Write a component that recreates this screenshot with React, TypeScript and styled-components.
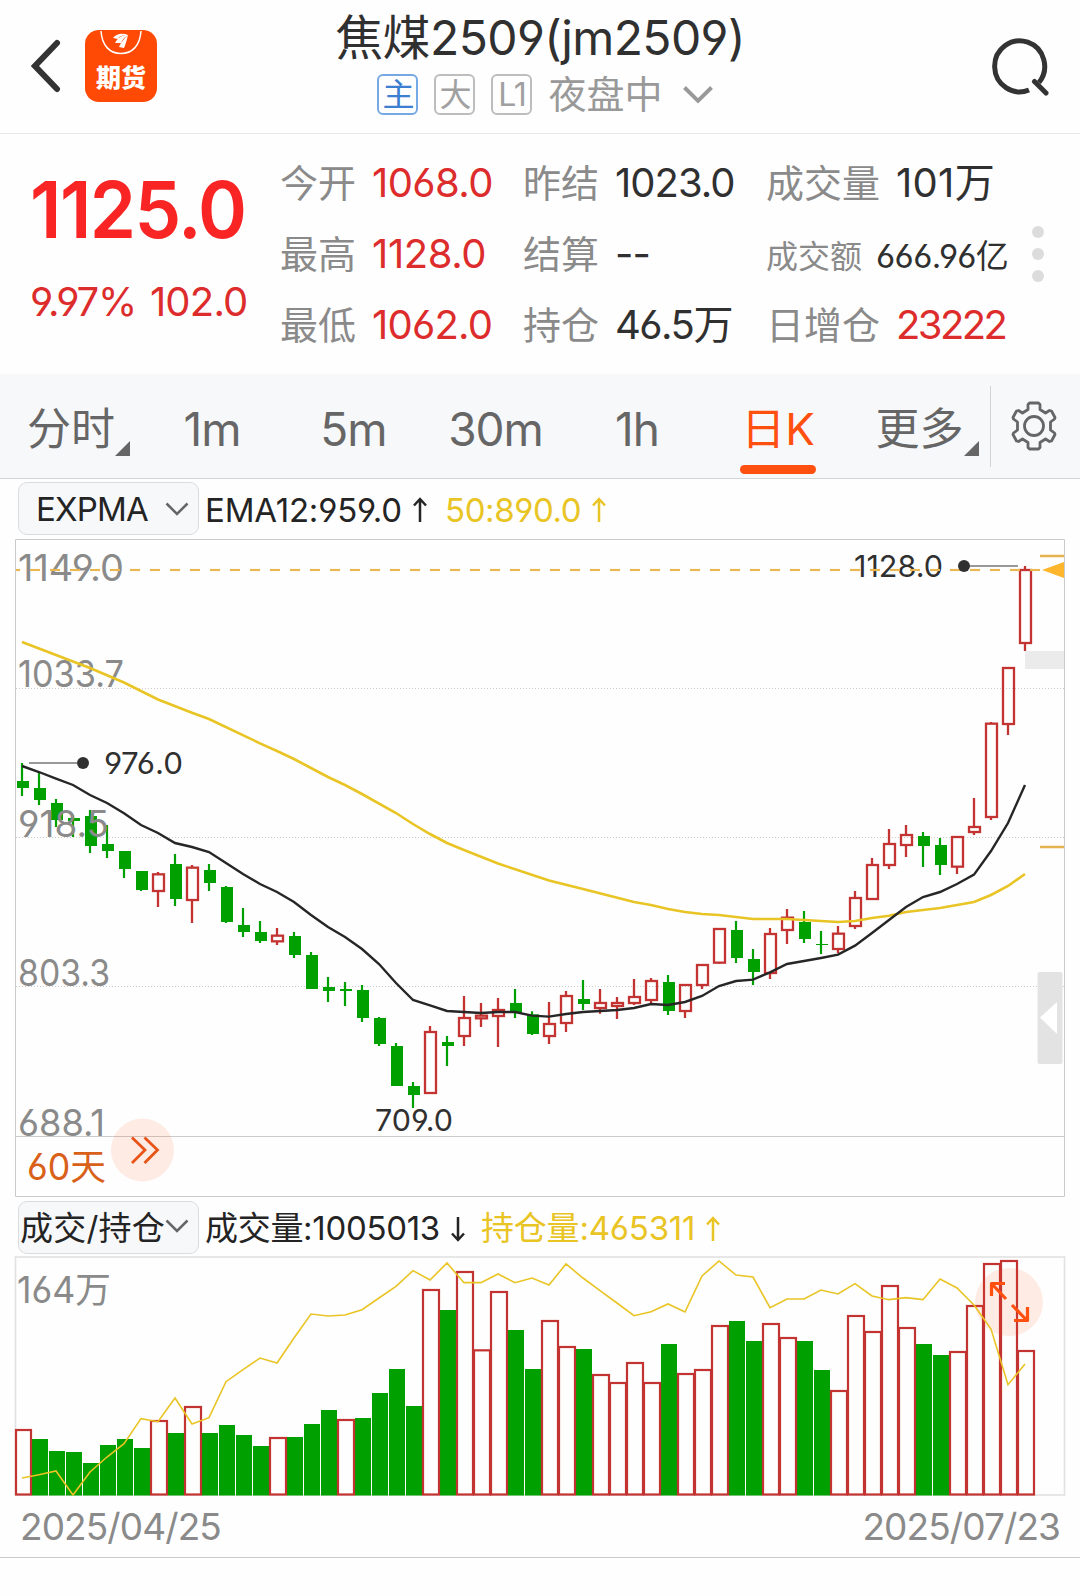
import React from 'react';
import styled, { createGlobalStyle } from 'styled-components';

const GlobalStyle = createGlobalStyle`
  body { margin: 0; background: #fefefe; }
  * { box-sizing: border-box; }
`;

const FONT = `Inter, 'Noto Sans CJK SC', sans-serif`;
const RED = '#dd2c2c';
const CANDLE_RED = '#c23331';
const GREEN = '#00a000';
const ORANGE = '#ff5010';
const YELLOW = '#e9c425';
const GREY = '#8a8a8a';
const INK = '#303030';

const Screen = styled.main`
  width: 1080px;
  height: 1596px;
  display: flex;
  flex-direction: column;
  background: #fefefe;
  font-family: ${FONT};
  font-feature-settings: 'cv03', 'cv04';
  color: ${INK};
  overflow: hidden;
`;

const Header = styled.header`
  height: 134px;
  flex: none;
  display: grid;
  grid-template-columns: 180px 1fr 180px;
  border-bottom: 1px solid #e9e9e9;
`;

const HeaderLeft = styled.div`
  display: flex;
  align-items: center;
  gap: 24px;
  padding: 0 0 1px 31px;
`;

const HeaderRight = styled.div`
  display: flex;
  align-items: center;
  justify-content: flex-end;
  padding: 0 30px 0 0;
`;

const HeaderCenter = styled.div`
  display: flex;
  flex-direction: column;
  align-items: center;
`;

const Title = styled.h1`
  margin: 0;
  height: 74px;
  line-height: 76px;
  font-size: 48px;
  font-weight: 400;
  letter-spacing: -0.6px;
  white-space: nowrap;
`;

const SubRow = styled.div`
  display: flex;
  align-items: center;
  height: 41px;
  padding-left: 10px;
  color: #999;
`;

const Tag = styled.span<{ $active?: boolean }>`
  width: 41px;
  height: 41px;
  margin-right: 16px;
  border: 2px solid ${p => (p.$active ? '#76a9e4' : '#bdbdbd')};
  border-radius: 6px;
  color: ${p => (p.$active ? '#3c7fd0' : '#a0a0a0')};
  font-size: 32px;
  line-height: 37px;
  letter-spacing: -1px;
  display: flex;
  justify-content: center;
`;

const Session = styled.span`
  font-size: 38px;
  line-height: 41px;
  margin-right: 20px;
`;

const Quote = styled.section`
  height: 240px;
  flex: none;
  display: grid;
  grid-template-columns: 280px 243px 243px 260px 1fr;
`;

const PriceBox = styled.div`
  padding: 35px 0 0 30px;
  white-space: nowrap;
`;

const Price = styled.div`
  color: #f92525;
  font-size: 79px;
  font-weight: 600;
  line-height: 80px;
  letter-spacing: -1.6px;
  transform: scaleX(0.94);
  transform-origin: left;
`;

const Change = styled.div`
  margin-top: 32px;
  color: ${RED};
  font-size: 40px;
  line-height: 42px;
  letter-spacing: -0.8px;
  display: flex;
  gap: 14px;
`;

const Percent = styled.span`
  letter-spacing: -1.3px;
`;

const Stats = styled.dl`
  margin: 0;
  padding: 13px 0 0;
  display: flex;
  flex-direction: column;
`;

const Stat = styled.div<{ $small?: boolean }>`
  height: 71px;
  display: flex;
  align-items: baseline;
  gap: ${p => (p.$small ? 14 : 16)}px;
  line-height: ${p => (p.$small ? 76 : 71)}px;
  font-size: ${p => (p.$small ? 32 : 38)}px;
  white-space: nowrap;
`;

const StatName = styled.dt`
  color: ${GREY};
`;

const StatValue = styled.dd<{ $tone?: string; $small?: boolean; $ls?: number }>`
  margin: 0;
  color: ${p => p.$tone || INK};
  font-size: ${p => (p.$small ? 33 : 40)}px;
  letter-spacing: ${p => p.$ls ?? -1}px;
`;

const Dots = styled.div`
  display: flex;
  flex-direction: column;
  gap: 10px;
  padding: 92px 0 0 6px;
`;

const Dot = styled.i`
  width: 12px;
  height: 12px;
  border-radius: 50%;
  background: #dcdcdc;
`;

const Tabs = styled.nav`
  height: 105px;
  flex: none;
  display: grid;
  grid-template-columns: 141px 141px 142px 142px 141px 141px 142px 1fr;
  background: #f7f8fa;
  border-bottom: 1px solid #d3d5d7;
`;

const Tab = styled.div<{ $active?: boolean; $corner?: boolean }>`
  display: flex;
  flex-direction: column;
  align-items: center;
  justify-content: space-between;
  padding: 23px 0 4px ${p => (p.$corner ? 16 : 1)}px;
  color: ${p => (p.$active ? ORANGE : '#666')};
  font-size: 46px;
  line-height: 60px;
  letter-spacing: -1px;
`;

const TabLabel = styled.div<{ $cjk?: boolean }>`
  height: 62px;
  display: flex;
  align-items: flex-end;
  white-space: nowrap;
  ${p => p.$cjk && 'font-size: 44px; letter-spacing: 0;'}
`;

const Underline = styled.i`
  width: 76px;
  height: 9px;
  border-radius: 5px;
  background: ${ORANGE};
`;

const Corner = styled.i`
  width: 0;
  height: 0;
  margin: 0 0 3px 0;
  border-left: 15px solid transparent;
  border-bottom: 15px solid #666;
`;

const SettingsCell = styled.div`
  height: 81px;
  margin-top: 12px;
  border-left: 1px solid #d2d4d6;
  display: flex;
  align-items: center;
  padding: 0 0 1px 20px;
`;

const IndicatorRow = styled.div<{ $h: number; $top: number }>`
  height: ${p => p.$h}px;
  flex: none;
  padding: ${p => p.$top}px 0 0 18px;
  display: flex;
  font-size: 33px;
  line-height: 53px;
  white-space: nowrap;
`;

const Select = styled.button<{ $pad: number; $ls: number; $lift: number }>`
  width: 181px;
  height: 53px;
  padding: 0 9px ${p => p.$lift}px ${p => p.$pad}px;
  display: flex;
  align-items: center;
  justify-content: space-between;
  background: #f7f8fa;
  border: 1px solid #dadde0;
  border-radius: 9px;
  font: 400 33px ${FONT};
  letter-spacing: ${p => p.$ls}px;
  white-space: nowrap;
  color: #242424;
`;

const Reading = styled.span<{ $color?: string; $ls: number; $w: number }>`
  width: ${p => p.$w}px;
  margin-left: 6px;
  color: ${p => p.$color || '#242424'};
  letter-spacing: ${p => p.$ls}px;
  display: flex;
  align-items: center;
  gap: 11px;
`;

const ChartSvg = styled.svg`
  display: block;
  flex: none;
  font-family: ${FONT};
`;

const Dates = styled.footer`
  height: 62px;
  flex: none;
  display: flex;
  justify-content: space-between;
  padding: 0 20px;
  border-bottom: 1px solid #cbcbcb;
  color: ${GREY};
  font-size: 37px;
  line-height: 62px;
  letter-spacing: -0.9px;
`;

const ChevronDown = ({ w, h, s, c }: { w: number; h: number; s: number; c: string }) => (
  <svg width={w} height={h} viewBox={`0 0 ${w} ${h}`} fill="none" stroke={c} strokeWidth={s}>
    <path d={`M1.5 1.5 L${w / 2} ${h - s * 0.8} L${w - 1.5} 1.5`} />
  </svg>
);

const Arrow = ({ down, c = '#242424' }: { down?: boolean; c?: string }) => (
  <svg width="14" height="26" viewBox="0 0 14 26" fill="none" stroke={c} strokeWidth="2.500">
    <path d={down ? 'M7 1V24M1 17.5L7 24L13 17.5' : 'M7 25V2M1 8.5L7 2L13 8.5'} />
  </svg>
);

const Logo = () => (
  <svg width="72" height="72" viewBox="0 0 72 72">
    <rect width="72" height="72" rx="14" fill="#ff4a05" />
    <path d="M16 1 C17 16 25 23.500 36 23.500 C47 23.500 55 16 56 1" fill="none" stroke="#fff" strokeWidth="1.500" />
    <path d="M28 8 C32 3 38 3 43 5 C38 5 34 6 33 9 Z M30 13 C33 7 38 5 43 5 C39 8 37 10 36 13 Z M34 17 C36 12 39 9 43 5 C42 9 41 13 39 18 Z" fill="#fff" />
    <text x="36" y="56.500" textAnchor="middle" fontSize="25" fontWeight="900" fill="#fff" fontFamily="'Noto Sans CJK SC', sans-serif">期货</text>
  </svg>
);

const Gear = () => (
  <svg width="46" height="50" viewBox="0 0 46 50" fill="none" stroke="#666" strokeWidth="2.800" strokeLinejoin="round">
    <path d="M18.500 2 H27.500 L29 3.500 V8.500 L34.500 12 L38.500 9.500 L40.500 10 L44 16.500 L43.500 18 L39.500 21 V29 L43.500 32 L44 33.500 L40.500 40 L38.500 40.500 L34.500 38 L29 41.500 V46.500 L27.500 48 H18.500 L17 46.500 V41.500 L11.500 38 L7.500 40.500 L5.500 40 L2 33.500 L2.500 32 L6.500 29 V21 L2.500 18 L2 16.500 L5.500 10 L7.500 9.500 L11.500 12 L17 8.500 V3.500 Z" />
    <circle cx="23" cy="25" r="9.500" />
  </svg>
);

/* up flag, high, body top, body bottom, low */
type Candle = [number, number, number, number, number];
const at = (base: number, rows: Candle[]): Candle[] =>
  rows.map(([u, ...v]) => [u, ...v.map(n => base + n / 3)] as Candle);

const CANDLES: Candle[] = [
  ...at(700, [
    [0, 189, 243, 264, 288], [0, 216, 264, 300, 315], [0, 297, 309, 360, 381], [0, 345, 354, 363, 411],
    [0, 330, 348, 438, 459], [0, 375, 432, 453, 474], [0, 453, 453, 507, 534], [0, 513, 513, 570, 573],
    [1, 516, 520, 576, 621], [0, 462, 492, 597, 618], [1, 495, 500, 603, 669], [0, 492, 510, 549, 573],
    [0, 558, 561, 666, 669], [0, 624, 675, 696, 711], [0, 663, 696, 723, 729], [1, 684, 704, 727, 735],
    [0, 696, 708, 765, 774], [0, 756, 765, 867, 867], [0, 831, 861, 873, 906], [0, 846, 867, 873, 918],
  ]),
  ...at(850, [
    [0, 405, 420, 504, 516], [0, 501, 504, 582, 588], [0, 579, 588, 708, 708], [0, 696, 708, 735, 774],
    [1, 528, 543, 732, 732], [0, 558, 576, 588, 648], [1, 438, 501, 561, 588], [1, 459, 494, 508, 531],
    [1, 444, 477, 501, 591], [0, 417, 459, 487, 504], [0, 484, 493, 552, 555], [1, 456, 519, 561, 582],
    [1, 423, 435, 522, 546], [0, 390, 447, 462, 480], [1, 417, 456, 477, 491], [1, 441, 456, 471, 507],
    [1, 387, 438, 462, 465], [1, 384, 390, 453, 462], [0, 375, 396, 483, 495], [1, 402, 402, 486, 504],
    [1, 342, 342, 408, 417],
  ]),
  ...at(750, [
    [1, 534, 534, 641, 641], [0, 513, 540, 624, 639], [0, 597, 627, 666, 705], [1, 534, 549, 672, 687],
    [1, 477, 500, 543, 582], [0, 483, 516, 567, 579], [0, 543, 582, 585, 612], [1, 528, 548, 600, 609],
    [1, 423, 441, 531, 537], [1, 324, 342, 450, 450], [1, 237, 279, 348, 357], [1, 225, 252, 288, 321],
    [0, 246, 258, 288, 351], [0, 264, 285, 345, 375], [1, 258, 258, 353, 372], [1, 144, 228, 249, 255],
    [1, -84, -82, 204, 210], [1, -249, -249, -75, -45], [1, -552, -543, -318, -297],
  ]),
];

const EMA12 = [
  ...[198, 216, 236, 255, 285, 309, 340, 375, 399, 429, 441, 456, 489, 522, 552, 576, 606, 645, 681, 711, 747].map(v => 700 + v / 3),
  ...[342, 399, 450, 466, 483, 486, 489, 486, 486, 497, 500, 492, 486, 483, 480, 474, 462, 465, 456, 438].map(v => 850 + v / 3),
  ...[708, 693, 689, 667, 642, 633, 624, 614, 587, 549, 510, 471, 441, 426, 402, 374, 303, 219, 105].map(v => 750 + v / 3),
];

const EMA50: [number, number][] = [
  [0, 642], [2, 655], [4, 668], [6, 682.5], [8, 699.500], [10, 712.700], [11, 719], [14, 743.300], [15, 751], [16, 759], [17, 768],
  [18, 777], [19, 785], [20, 794], [22, 813], [23, 824], [24, 834], [25, 843], [26, 850], [28, 863.500], [31, 880.500],
  [33, 889], [36, 902], [37, 905], [38, 909], [39, 912], [40, 914], [41, 915], [43, 919], [45, 919], [46, 920], [48, 922],
  [49, 921], [50, 918], [51, 915.700], [52, 912], [54, 908], [56, 902], [57, 895], [58, 886], [59, 874],
];

const VOLUMES = [
  747, 777, 813, 816, 849, 795, 777, 804, 720, 759, 678, 759, 735, 765, 798, 771, 771, 732, 690, 717, 714, 639, 567, 678, 327,
  390, 273, 508, 333, 450, 567, 420, 498, 507, 582, 606, 546, 606, 492, 579, 567, 435, 423, 483, 429, 471, 483, 570, 630, 405,
  453, 315, 441, 492, 525, 513, 375, 249, 240, 510,
];

const INTEREST = [
  894, 884, 873, 945, 876, 831, 791, 716, 725, 654, 732, 713, 605, 569, 534, 549, 474, 402, 408, 405, 389, 354, 319, 272, 300,
  249, 308, 308, 282, 308, 294, 315, 252, 294, 332, 369, 407, 395, 372, 396, 288, 243, 285, 291, 383, 357, 357, 330, 342, 311,
  348, 359, 353, 359, 297, 324, 375, 447, 614, 552,
];

const cx = (i: number) => 22 + 17 * i;
const line = (pts: [number, number][]) => pts.map(([i, y]) => `${cx(i)},${y}`).join(' ');

const volumeUp = (i: number) => i === 0 || i === 19 || CANDLES[i][0] === 1;

const AXIS: [string, number, number][] = [
  ['1149.0', 581, 103], ['1033.7', 687, 103], ['918.5', 836.5, 88], ['803.3', 985.5, 89], ['688.1', 1135.5, 84],
];

const KLine = () => (
  <ChartSvg width="1080" height="660" viewBox="0 538 1080 660">
    <g fill="none" stroke="#cbcbcb">
      <path d="M15.500 539.500H1064.500V1196.500H15.500Z" />
      <path d="M15 1136.500H1064" />
      <path d="M16 688.500H1064M16 837.500H1064M16 986.500H1064" strokeDasharray="1 2" />
    </g>
    <rect x="1025" y="651" width="39" height="18" fill="#ebebeb" />
    {CANDLES.map(([up, h, t, b, l], i) => {
      const x = cx(i);
      return up ? (
        <g key={i} fill="none" stroke={CANDLE_RED} strokeWidth="2.300">
          <path d={`M${x} ${h}V${t + 1}M${x} ${b - 1}V${l}`} />
          <rect x={x - 5} y={t + 1} width="11" height={Math.max(b - t - 2, 1)} />
        </g>
      ) : (
        <g key={i} fill={GREEN}>
          <rect x={x - 1.1} y={h} width="2.200" height={l - h} />
          <rect x={x - 5} y={t} width="12" height={b - t} />
        </g>
      );
    })}
    <g fill={GREY} fontSize="36.500">
      {AXIS.map(([t, y, w]) => (
        <text key={t} x="18" y={y} textLength={w + 3} lengthAdjust="spacingAndGlyphs">{t}</text>
      ))}
    </g>
    <polyline points={line(EMA50)} fill="none" stroke={YELLOW} strokeWidth="2.600" />
    <polyline points={line(EMA12.map((y, i) => [i, y]))} fill="none" stroke="#262626" strokeWidth="2.400" />
    <g fill={INK} fontSize="30">
      <text x="854" y="577" textLength="89" lengthAdjust="spacingAndGlyphs">1128.0</text>
      <text x="104" y="774" textLength="79" lengthAdjust="spacingAndGlyphs">976.0</text>
      <text x="375" y="1131" textLength="78" lengthAdjust="spacingAndGlyphs">709.0</text>
    </g>
    <path d="M10 570H1040" stroke="#eab650" strokeWidth="2.500" strokeDasharray="10 10" clipPath="inset(0 0 0 6px)" />
    <path d="M970 566H1018M29 763H77" stroke="#999" strokeWidth="2" />
    <circle cx="964" cy="566" r="6" fill={INK} />
    <circle cx="83" cy="763" r="6" fill={INK} />
    <path d="M1040 556H1064M1040 847H1064" stroke="#e5b44e" strokeWidth="2.500" />
    <path d="M1042 570L1064 562V578Z" fill="#ffb62c" />
    <rect x="1037.500" y="972" width="25" height="92" rx="2" fill="#e3e3e3" />
    <path d="M1040 1017.500L1057 1002V1034Z" fill="#fff" />
    <circle cx="142.500" cy="1150" r="31.500" fill="#ff5010" fillOpacity="0.110" />
    <path d="M132 1137.500L145 1150L132 1163M144.500 1137.500L157.500 1150L144.500 1163" fill="none" stroke="#e85318" strokeWidth="2.800" />
    <text x="27" y="1180" fill="#d96019" fontSize="36.500" textLength="79" lengthAdjust="spacingAndGlyphs">60天</text>
  </ChartSvg>
);

const VolumeChart = () => (
  <ChartSvg width="1080" height="240" viewBox="0 1256 1080 240">
    <rect x="15.500" y="1257" width="1049" height="238" fill="none" stroke="#e1e1e1" strokeWidth="1.600" />
    {VOLUMES.map((v, i) => {
      const y = 1180 + v / 3;
      return volumeUp(i) ? null : <rect key={i} x={15 + 17 * i} y={y} width="16" height={1495.500 - y} fill={GREEN} />;
    })}
    {VOLUMES.map((v, i) => {
      const y = 1181 + v / 3;
      const x = Math.max(15 + 17 * i, 16);
      return volumeUp(i) ? (
        <rect key={i} x={x} y={y} width={31 + 17 * i - x} height={1494.500 - y} fill="none" stroke={CANDLE_RED} strokeWidth="2.200" />
      ) : null;
    })}
    <circle cx="1009" cy="1302" r="34" fill="#ff5010" fillOpacity="0.110" />
    <polyline points={line(INTEREST.map((v, i) => [i, 1180 + v / 3]))} fill="none" stroke={YELLOW} strokeWidth="1.600" />
    <text x="17" y="1302.500" fill={GREY} fontSize="36.500" textLength="94" lengthAdjust="spacingAndGlyphs">164万</text>
    <path d="M1006 1299L992 1284M991.500 1296V1283.500H1005M1012 1305L1026.500 1320M1014 1320.500H1027.500V1307" fill="none" stroke="#ff5010" strokeWidth="3.200" strokeLinejoin="round" />
  </ChartSvg>
);

type Item = { name: string; value: string; tone?: string; small?: boolean; ls?: number };
const COLUMNS: Item[][] = [
  [{ name: '今开', value: '1068.0', tone: RED, ls: -0.6 }, { name: '最高', value: '1128.0', tone: RED, ls: -0.4 }, { name: '最低', value: '1062.0', tone: RED, ls: -0.8 }],
  [{ name: '昨结', value: '1023.0' }, { name: '结算', value: '--' }, { name: '持仓', value: '46.5万', ls: -1.5 }],
  [{ name: '成交量', value: '101万', ls: 0.3 }, { name: '成交额', value: '666.96亿', small: true, ls: -0.6 }, { name: '日增仓', value: '23222', tone: RED, ls: -2.6 }],
];

export default function App() {
  return (
    <Screen>
      <GlobalStyle />
      <Header>
        <HeaderLeft>
          <svg width="30" height="54" viewBox="0 0 30 54" fill="none" stroke="#333" strokeWidth="6" strokeLinecap="round">
            <path d="M26 4L4 27L26 50" />
          </svg>
          <Logo />
        </HeaderLeft>
        <HeaderCenter>
          <Title>焦煤2509(jm2509)</Title>
          <SubRow>
            <Tag $active>主</Tag>
            <Tag>大</Tag>
            <Tag>L1</Tag>
            <Session>夜盘中</Session>
            <ChevronDown w={30} h={18} s={4} c="#999" />
          </SubRow>
        </HeaderCenter>
        <HeaderRight>
          <svg width="58" height="58" viewBox="0 0 58 58" fill="none" stroke="#333" strokeWidth="5" strokeLinecap="round">
            <path d="M37 52A25 25.500 0 1 1 47 44.500" strokeLinecap="butt" />
            <path d="M42.500 43.500L54 55" />
          </svg>
        </HeaderRight>
      </Header>

      <Quote>
        <PriceBox>
          <Price>1125.0</Price>
          <Change><Percent>9.97%</Percent><span>102.0</span></Change>
        </PriceBox>
        {COLUMNS.map((col, c) => (
          <Stats key={c}>
            {col.map(s => (
              <Stat key={s.name} $small={s.small}>
                <StatName>{s.name}</StatName>
                <StatValue $tone={s.tone} $small={s.small} $ls={s.ls}>{s.value}</StatValue>
              </Stat>
            ))}
          </Stats>
        ))}
        <Dots><Dot /><Dot /><Dot /></Dots>
      </Quote>

      <Tabs>
        <Tab $corner><TabLabel $cjk>分时<Corner /></TabLabel></Tab>
        <Tab><TabLabel>1m</TabLabel></Tab>
        <Tab><TabLabel>5m</TabLabel></Tab>
        <Tab><TabLabel>30m</TabLabel></Tab>
        <Tab><TabLabel>1h</TabLabel></Tab>
        <Tab $active><TabLabel $cjk>日K</TabLabel><Underline /></Tab>
        <Tab $corner><TabLabel $cjk>更多<Corner /></TabLabel></Tab>
        <SettingsCell><Gear /></SettingsCell>
      </Tabs>

      <IndicatorRow $h={59} $top={3}>
        <Select $pad={17} $ls={-0.8} $lift={0}>EXPMA<ChevronDown w={24} h={14} s={2.5} c="#666" /></Select>
        <Reading $ls={-0.2} $w={234}>EMA12:959.0<Arrow /></Reading>
        <Reading $ls={-0.4} $w={200} $color={YELLOW}>50:890.0<Arrow c={YELLOW} /></Reading>
      </IndicatorRow>
      <KLine />
      <IndicatorRow $h={58} $top={3}>
        <Select $pad={1} $ls={0.2} $lift={3}>成交/持仓<ChevronDown w={24} h={14} s={2.5} c="#666" /></Select>
        <Reading $ls={-0.3} $w={270}>成交量:1005013<Arrow down /></Reading>
        <Reading $ls={-0.2} $w={260} $color={YELLOW}>持仓量:465311<Arrow c={YELLOW} /></Reading>
      </IndicatorRow>
      <VolumeChart />
      <Dates><span>2025/04/25</span><span>2025/07/23</span></Dates>
    </Screen>
  );
}
